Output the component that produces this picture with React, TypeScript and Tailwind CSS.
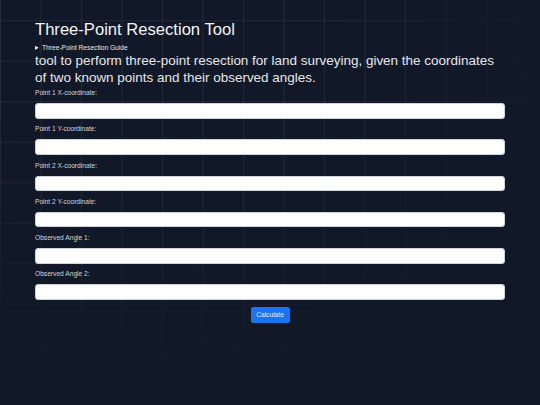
import React from "react";

const fields = [
  "Point 1 X-coordinate:",
  "Point 1 Y-coordinate:",
  "Point 2 X-coordinate:",
  "Point 2 Y-coordinate:",
  "Observed Angle 1:",
  "Observed Angle 2:",
];

export default function App() {
  return (
    <div className="relative w-[540px] h-[405px] overflow-hidden bg-[#111827] font-['Liberation_Sans',Arial,sans-serif]">
      <div className="pointer-events-none absolute inset-0 bg-[linear-gradient(to_right,rgba(255,255,255,0.07)_1px,transparent_1px),linear-gradient(to_bottom,rgba(255,255,255,0.07)_1px,transparent_1px)] bg-[size:40.5px_40.5px] [background-position:0_20.25px] [mask-image:radial-gradient(ellipse_75%_85%_at_30%_10%,black_45%,transparent_100%)]" />
      <div className="relative flex flex-col px-[35px] pt-[20px]">
        <h1 className="text-[16.6px] leading-[19px] text-[#f3f4f6] font-normal">
          Three-Point Resection Tool
        </h1>
        <details className="mt-[5px] text-[6.65px] leading-[8px] text-[#e5e7eb]">
          <summary className="cursor-pointer">Three-Point Resection Guide</summary>
        </details>
        <p className="text-[13.47px] leading-[17px] text-[#e5e7eb]">
          tool to perform three-point resection for land surveying, given the coordinates of two known points and their observed angles.
        </p>
        <div className="mt-[3px] flex flex-col">
          {fields.map((f) => (
            <div key={f} className="flex flex-col mb-[6.8px]">
              <label className="text-[6.65px] leading-[8px] text-[#d1d5db]">{f}</label>
              <input
                type="text"
                className="mt-[6px] h-[15.5px] w-[470px] rounded-[3px] border border-[#cfd4dc] bg-white"
              />
            </div>
          ))}
        </div>
        <div className="flex justify-center">
          <button className="h-[16px] w-[39px] rounded-[2.5px] bg-[#1a73f0] text-[6.65px] leading-[8px] text-[#e8eefc]">
            Calculate
          </button>
        </div>
      </div>
    </div>
  );
}
